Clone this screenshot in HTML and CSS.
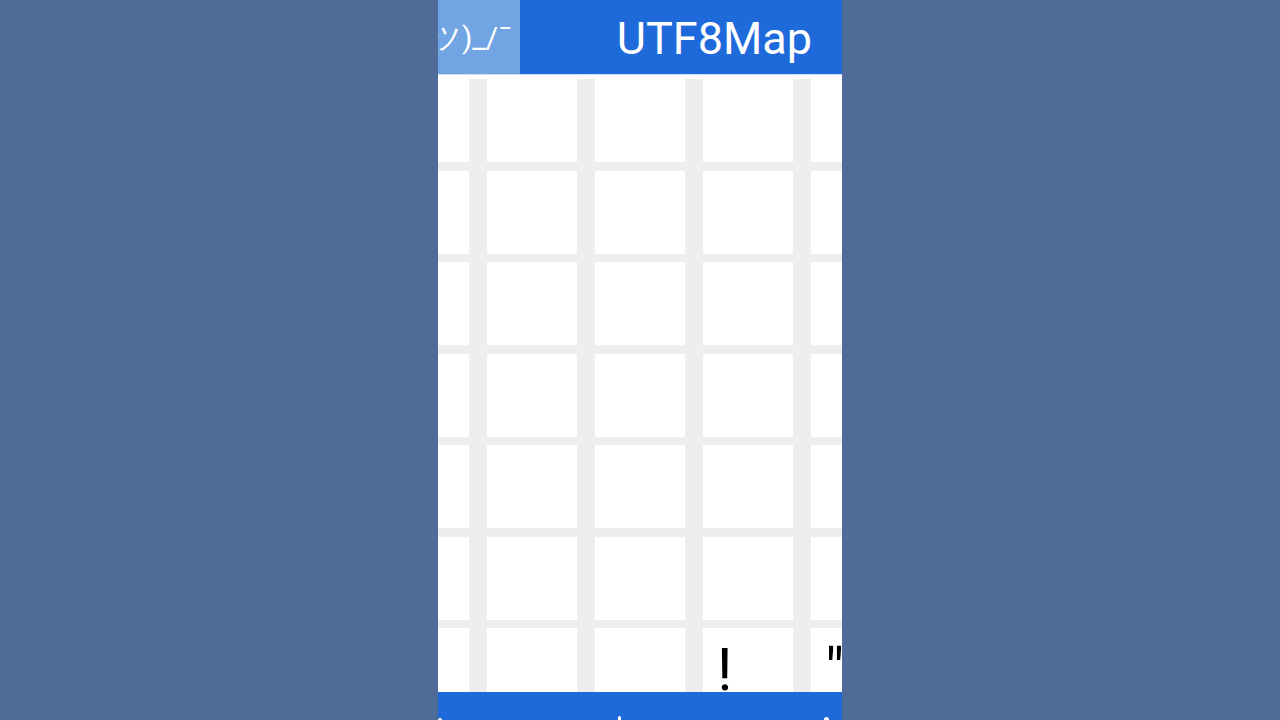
FILE: index.html
```html
<!DOCTYPE html>
<html>
<head>
<meta charset="utf-8">
<link rel="stylesheet" href="styles.css">
</head>
<body>
<div class="stage">
  <div class="phone">
    <header class="appbar">
      <div class="tab"><span class="tab-text">¯\_(ツ)_/¯</span></div>
      <h1 class="title">UTF8Map</h1>
    </header>
    <div class="grid-view">
      <div class="grid">
        <div class="cell"></div><div class="cell"></div><div class="cell"></div><div class="cell"></div><div class="cell"></div>
        <div class="cell"></div><div class="cell"></div><div class="cell"></div><div class="cell"></div><div class="cell"></div>
        <div class="cell"></div><div class="cell"></div><div class="cell"></div><div class="cell"></div><div class="cell"></div>
        <div class="cell"></div><div class="cell"></div><div class="cell"></div><div class="cell"></div><div class="cell"></div>
        <div class="cell"></div><div class="cell"></div><div class="cell"></div><div class="cell"></div><div class="cell"></div>
        <div class="cell"></div><div class="cell"></div><div class="cell"></div><div class="cell"></div><div class="cell"></div>
        <div class="cell"></div><div class="cell"></div><div class="cell"></div><div class="cell">!</div><div class="cell">"</div>
      </div>
    </div>
    <footer class="bottombar">
      <span class="nub nub-a"></span>
      <span class="nub nub-b"></span>
      <span class="nub nub-c"></span>
    </footer>
  </div>
</div>
</body>
</html>
```
FILE: styles.css
```css
html, body {
  margin: 0;
  padding: 0;
  height: 100%;
}
body {
  background: #4f6c98;
  font-family: Roboto, "Noto Sans", sans-serif;
  overflow: hidden;
}
.stage {
  display: flex;
  justify-content: center;
  height: 720px;
}
.phone {
  width: 404px;
  height: 720px;
  background: #ffffff;
  display: flex;
  flex-direction: column;
  overflow: hidden;
}
.appbar {
  flex: 0 0 74px;
  height: 74px;
  background: #1f6adb;
  display: flex;
  align-items: stretch;
  border-bottom: 1px solid #cfe0f6;
}
.tab {
  width: 82px;
  background: #70a4e2;
  display: flex;
  justify-content: flex-end;
  align-items: center;
  overflow: hidden;
  padding-right: 8px;
  box-sizing: border-box;
}
.tab-text {
  color: #ffffff;
  font-size: 30px;
  white-space: nowrap;
  flex: 0 0 auto;
  margin-top: 2px;
}
.title {
  flex: 1;
  margin: 0;
  text-align: right;
  padding-right: 30px;
  color: #ffffff;
  font-size: 45px;
  font-weight: 400;
  line-height: 74px;
  padding-top: 2px;
  box-sizing: border-box;
}
.grid-view {
  flex: 1;
  overflow: hidden;
  padding-top: 4px;
}
.grid {
  display: grid;
  grid-template-columns: repeat(5, 90px);
  grid-auto-rows: 83px;
  column-gap: 18px;
  row-gap: 8.5px;
  margin-left: -59px;
  width: 520px;
  background: #eeeeee;
}
.cell {
  background: #ffffff;
  color: #000000;
  font-size: 60px;
  line-height: 60px;
  padding: 12px 0 0 14px;
  box-sizing: border-box;
  overflow: hidden;
}
.bottombar {
  flex: 0 0 28px;
  height: 28px;
  background: #1f6adb;
  position: relative;
}
.nub {
  position: absolute;
  background: #ffffff;
  border-radius: 3px 3px 0 0;
}
.nub-a { left: 0; top: 26px; width: 4px; height: 4px; }
.nub-b { left: 180px; top: 24px; width: 3px; height: 6px; }
.nub-c { left: 386px; top: 25px; width: 5px; height: 5px; border-radius: 50% 50% 0 0; }
```
